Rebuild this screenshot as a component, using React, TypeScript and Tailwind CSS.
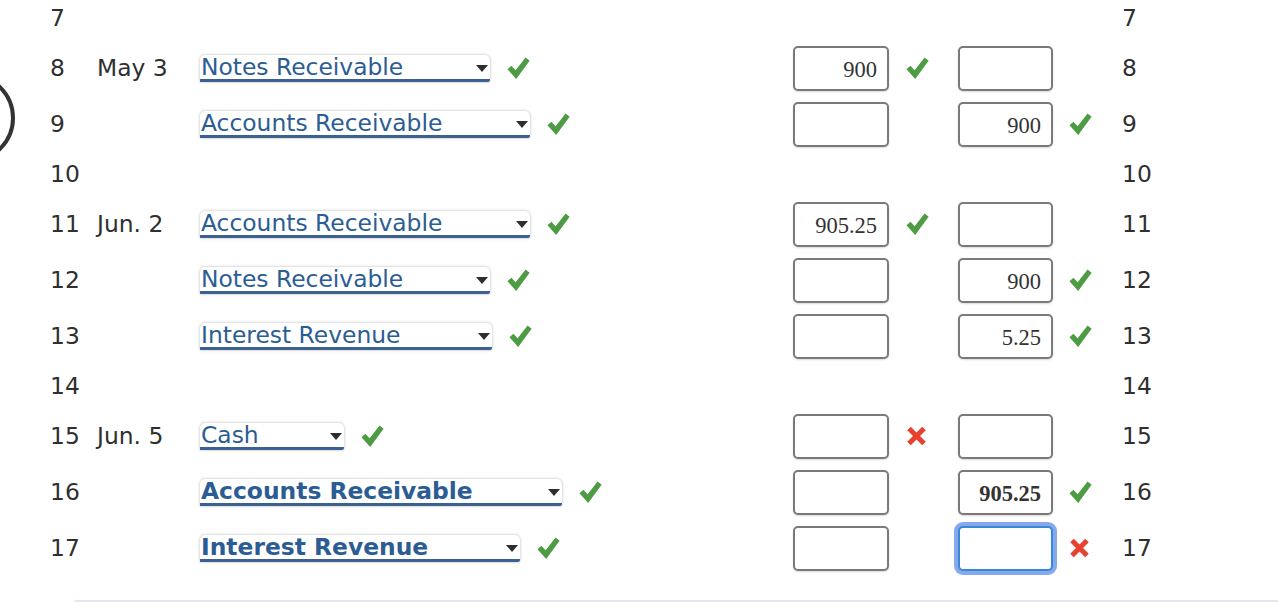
import React from "react";

type Row = {
  n: number;
  date?: string;
  acct?: string;
  acctW?: number;
  bold?: boolean;
  debit?: string;
  debitMark?: "ok" | "bad";
  credit?: string;
  creditMark?: "ok" | "bad";
  creditBold?: boolean;
  focus?: boolean;
};

const rows: Row[] = [
  { n: 7 },
  { n: 8, date: "May 3", acct: "Notes Receivable", acctW: 290, debit: "900", debitMark: "ok", credit: "" },
  { n: 9, acct: "Accounts Receivable", acctW: 330, debit: "", credit: "900", creditMark: "ok" },
  { n: 10 },
  { n: 11, date: "Jun. 2", acct: "Accounts Receivable", acctW: 330, debit: "905.25", debitMark: "ok", credit: "" },
  { n: 12, acct: "Notes Receivable", acctW: 290, debit: "", credit: "900", creditMark: "ok" },
  { n: 13, acct: "Interest Revenue", acctW: 292, debit: "", credit: "5.25", creditMark: "ok" },
  { n: 14 },
  { n: 15, date: "Jun. 5", acct: "Cash", acctW: 144, debit: "", debitMark: "bad", credit: "" },
  { n: 16, acct: "Accounts Receivable", acctW: 362, bold: true, debit: "", credit: "905.25", creditMark: "ok", creditBold: true },
  { n: 17, acct: "Interest Revenue", acctW: 320, bold: true, debit: "", credit: "", creditMark: "bad", focus: true },
];

function Check() {
  return (
    <svg width="23" height="23" viewBox="0 0 24 24" className="block">
      <path d="M0.5 12.8 L4.6 9.2 L9 13.8 L19.4 0.6 L23.6 3.8 L9.6 23 Z" fill="#4d9b42" />
    </svg>
  );
}

function Cross() {
  return (
    <svg width="21" height="20" viewBox="0 0 21 20" className="block">
      <path d="M3 2.5 L18 17.5 M18 2.5 L3 17.5" stroke="#e8412f" strokeWidth="5" strokeLinecap="butt" />
    </svg>
  );
}

function Mark({ m }: { m?: "ok" | "bad" }) {
  if (m === "ok") return <Check />;
  if (m === "bad") return <Cross />;
  return null;
}

function Select({ label, w, bold }: { label: string; w: number; bold?: boolean }) {
  return (
    <div
      className="relative flex h-[27px] items-center rounded-t-[5px] rounded-br-[2px] border-b-[3px] border-[#3a6190] bg-white pl-[1px] shadow-[0_0_3px_rgba(0,0,0,0.3)]"
      style={{ width: w }}
    >
      <span
        className={`whitespace-nowrap pt-[3px] text-[23.4px] leading-none text-[#2b5d94] ${bold ? "font-bold" : "font-normal"}`}
        style={{ fontFamily: '"DejaVu Sans", Verdana, sans-serif' }}
      >
        {label}
      </span>
      <svg width="12" height="7" viewBox="0 0 12 7" className="absolute right-[2px] top-[10px]">
        <path d="M0 0 L12 0 L6 7 Z" fill="#2e2e2e" />
      </svg>
    </div>
  );
}

function Input({ value, bold, focus }: { value?: string; bold?: boolean; focus?: boolean }) {
  return (
    <div
      className={`flex h-[45px] items-center justify-end rounded-[5px] border-2 bg-white pr-[10px] ${
        focus
          ? "border-[#3a87d4] shadow-[0_0_0_4px_#85a9ee]"
          : "border-[#7a7a7a] shadow-[0_1px_2px_rgba(0,0,0,0.15)]"
      }`}
    >
      <span
        className={`pt-[4px] text-[22.5px] leading-none text-[#333] ${bold ? "font-bold" : "font-normal"}`}
        style={{ fontFamily: '"Liberation Serif", "Times New Roman", serif' }}
      >
        {value}
      </span>
    </div>
  );
}

export default function App() {
  return (
    <div
      className="relative h-[602px] w-[1278px] overflow-hidden bg-white text-[#2f2f2f]"
      style={{ fontFamily: '"DejaVu Sans", Verdana, sans-serif' }}
    >
      <div className="absolute left-[-75px] top-[73px] h-[90px] w-[90px] rounded-full border-[4px] border-[#333]" />
      <div className="-mt-[4px] flex flex-col">
        {rows.map((r) => {
          const hasInputs = r.debit !== undefined;
          return (
            <div
              key={r.n}
              className={`flex items-center pl-[50px] text-[23.4px] leading-none ${hasInputs ? "h-[56px]" : "h-[44px]"}`}
            >
              <div className="w-[47px] pt-[2px]">{r.n}</div>
              <div className="w-[103px] whitespace-nowrap pt-[2px]">{r.date ?? ""}</div>
              <div className="flex w-[593px] items-center gap-[17px]">
                {r.acct && <Select label={r.acct} w={r.acctW!} bold={r.bold} />}
                {r.acct && <Check />}
              </div>
              <div className="w-[96px]">{hasInputs && <Input value={r.debit} />}</div>
              <div className="flex w-[69px] pl-[17px]">{hasInputs && <Mark m={r.debitMark} />}</div>
              <div className="w-[95px]">
                {hasInputs && <Input value={r.credit} bold={r.creditBold} focus={r.focus} />}
              </div>
              <div className="flex w-[69px] pl-[16px]">{hasInputs && <Mark m={r.creditMark} />}</div>
              <div className="pt-[2px]">{r.n}</div>
            </div>
          );
        })}
      </div>
      <div className="ml-[75px] mt-[24px] h-[2px] bg-[#e4e8ec]" />
    </div>
  );
}
